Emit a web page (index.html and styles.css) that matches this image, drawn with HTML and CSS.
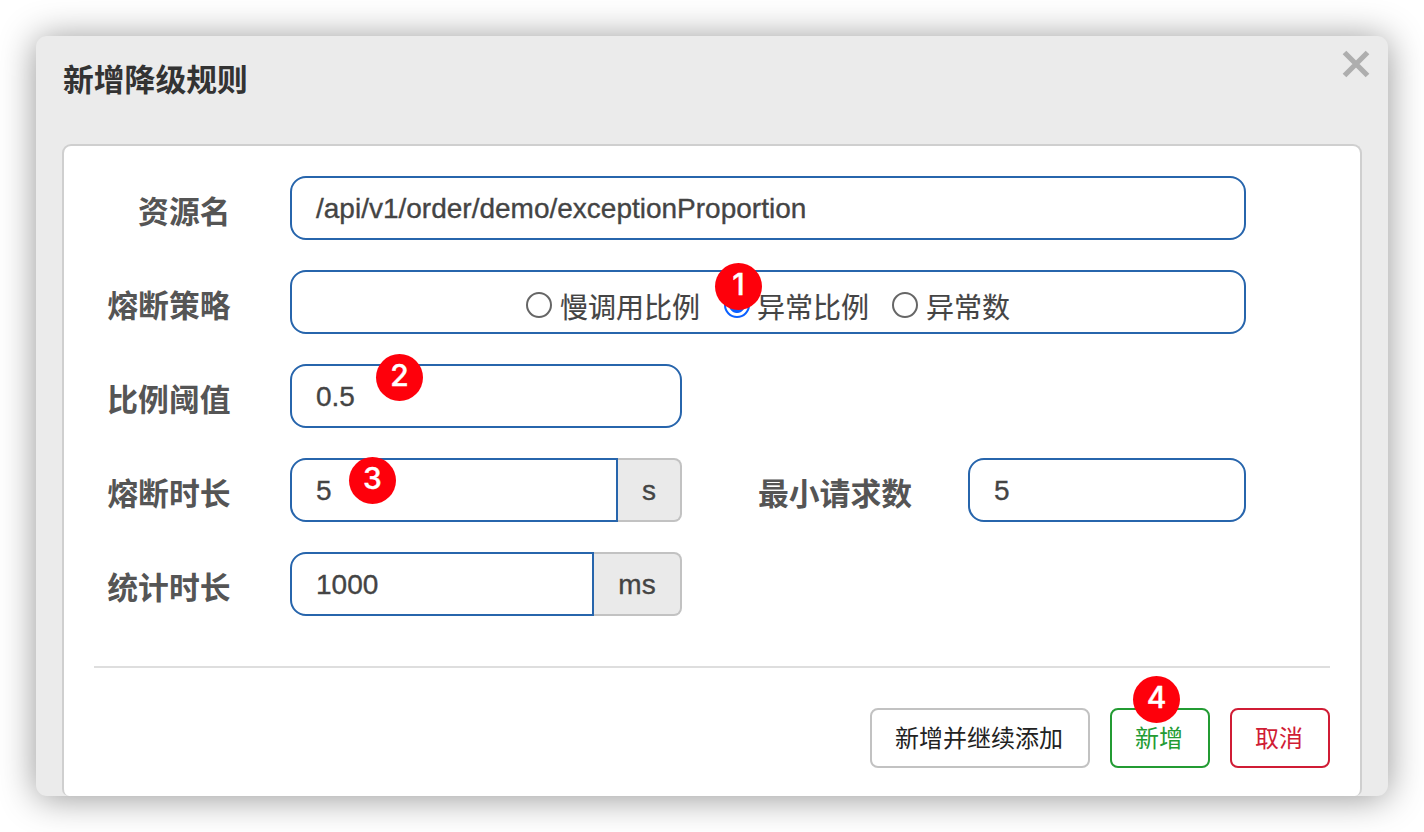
FILE: index.html
```html
<!DOCTYPE html>
<html lang="zh-CN">
<head>
<meta charset="utf-8">
<title>新增降级规则</title>
<link rel="stylesheet" href="styles.css">
</head>
<body>
<div class="dialog">
  <header class="dialog-head">
    <h1 class="title">新增降级规则</h1>
    <svg class="close" viewBox="0 0 28 28"><path d="M2.5 2.5 25.5 25.5M25.5 2.5 2.5 25.5"/></svg>
  </header>
  <main class="panel">
    <div class="row">
      <span class="label">资源名</span>
      <div class="field wide">/api/v1/order/demo/exceptionProportion</div>
    </div>
    <div class="row">
      <span class="label">熔断策略</span>
      <div class="field wide radios">
        <span class="option"><i class="radio"></i>慢调用比例</span>
        <span class="option"><i class="radio checked"></i>异常比例<b class="badge badge-1">1</b></span>
        <span class="option"><i class="radio"></i>异常数</span>
      </div>
    </div>
    <div class="row">
      <span class="label">比例阈值</span>
      <div class="field half">0.5<b class="badge badge-2">2</b></div>
    </div>
    <div class="row">
      <span class="label">熔断时长</span>
      <div class="group"><div class="field joined">5<b class="badge badge-3">3</b></div><span class="unit unit-s">s</span></div>
      <span class="label label-right">最小请求数</span>
      <div class="field small">5</div>
    </div>
    <div class="row">
      <span class="label">统计时长</span>
      <div class="group"><div class="field joined">1000</div><span class="unit unit-ms">ms</span></div>
    </div>
    <footer class="actions">
      <button class="btn">新增并继续添加</button>
      <button class="btn green">新增<b class="badge badge-4">4</b></button>
      <button class="btn red">取消</button>
    </footer>
  </main>
</div>
</body>
</html>
```

FILE: styles.css
```css
* { box-sizing: border-box; }

body {
  margin: 0;
  height: 832px;
  padding: 36px;
  overflow: hidden;
  background: #fff;
  font-family: "Liberation Sans", "Noto Sans CJK SC", sans-serif;
  color: #444;
}

.dialog {
  height: 760px;
  border-radius: 11px;
  background: #ebebeb;
  box-shadow: 0 2px 36px rgba(0, 0, 0, .42);
}

.dialog-head {
  height: 108px;
  padding: 14px 18px 0 27px;
  display: flex;
  justify-content: space-between;
}

.title {
  margin: 4px 0 0;
  font: bold 30.8px/48px "Noto Sans CJK SC", sans-serif;
  color: #333;
}

.close { width: 28px; height: 28px; overflow: visible; }
.close path { stroke: #aeaeae; stroke-width: 5.2; fill: none; }

.panel {
  height: 652px;
  margin: 0 26px;
  padding: 30px 30px 0;
  border: 2px solid #cfcfcf;
  border-bottom: 0;
  border-radius: 9px 9px 7px 7px;
  background: #fff;
}

.row {
  display: flex;
  height: 64px;
  margin-bottom: 30px;
}

.label {
  width: 136.5px;
  margin-right: 59.5px;
  padding-top: 2px;
  text-align: right;
  white-space: nowrap;
  font: bold 30.8px/63px "Noto Sans CJK SC", sans-serif;
  color: #555;
}
.label-right { width: 230px; margin-right: 56px; }

.field {
  position: relative;
  height: 64px;
  padding: 0 24px;
  border: 2px solid #2765ac;
  border-radius: 16px;
  background: #fff;
  font-size: 28px;
  line-height: 61px;
  white-space: nowrap;
  -webkit-text-stroke: .35px currentColor;
}
.wide { width: 956px; }
.half { width: 392px; }
.small { width: 278px; }
.group { display: flex; width: 392px; }
.joined { flex: 1; border-radius: 16px 0 0 16px; }

.unit {
  border: 2px solid #c2c2c2;
  border-left: 0;
  border-radius: 0 8px 8px 0;
  background: #eaeaea;
  text-align: center;
  font-size: 28px;
  line-height: 61px;
  -webkit-text-stroke: .35px currentColor;
}
.unit-s { width: 64px; }
.unit-ms { width: 88px; }

.radios {
  display: flex;
  justify-content: center;
  gap: 23px;
  font-family: "Noto Sans CJK SC", sans-serif;
  -webkit-text-stroke: .15px currentColor;
}
.option {
  position: relative;
  display: flex;
  gap: 8px;
  line-height: 69px;
  font-size: 28px;
}
.radio {
  width: 26px;
  height: 26px;
  margin-top: 20px;
  border: 2px solid #666;
  border-radius: 50%;
}
.checked {
  position: relative;
  left: 1px;
  border-color: #0a60ff;
  background: radial-gradient(circle, #0a60ff 7.5px, transparent 8.5px);
}

.badge {
  position: absolute;
  width: 47px;
  height: 47px;
  border-radius: 50%;
  background: #fe000b;
  color: #fff;
  text-align: center;
  font: 500 30px/43px Inter, sans-serif;
  -webkit-text-stroke: .4px #fff;
}
.badge-1 { left: -8px; top: -9px; }
.badge-2 { left: 84px; top: -12px; }
.badge-3 { left: 57px; top: -3px; }
.badge-4 { left: 21px; top: -34px; }

.actions {
  display: flex;
  justify-content: flex-end;
  gap: 20px;
  margin-top: 50px;
  padding-top: 40px;
  border-top: 2px solid #dedede;
}
.btn {
  position: relative;
  height: 60px;
  padding: 0 25px 3px 23px;
  border: 2px solid #c2c2c2;
  border-radius: 8px;
  background: #fff;
  color: #222;
  font: 24px/53px "Noto Sans CJK SC", sans-serif;
}
.green { border-color: #239b33; color: #239b33; }
.red { border-color: #d01c35; color: #d01c35; }
```
